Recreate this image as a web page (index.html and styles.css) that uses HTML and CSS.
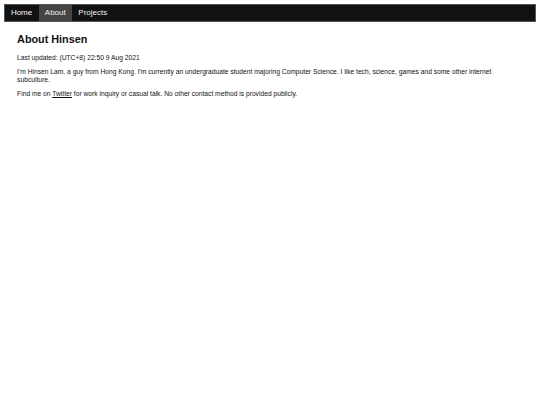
FILE: index.html
```html
<!DOCTYPE html>
<html lang="en">
<head>
<meta charset="utf-8">
<title>About Hinsen</title>
<link rel="stylesheet" href="styles.css">
</head>
<body>
<nav class="topnav">
  <a class="nav-link" href="#">Home</a>
  <a class="nav-link active" href="#">About</a>
  <a class="nav-link" href="#">Projects</a>
</nav>
<main class="content">
  <h1 class="title">About Hinsen</h1>
  <p class="text">Last updated: (UTC+8) 22:50 9 Aug 2021</p>
  <p class="text">I'm Hinsen Lam, a guy from Hong Kong. I'm currently an undergraduate student majoring Computer Science. I like tech, science, games and some other internet subculture.</p>
  <p class="text">Find me on <a class="link" href="#">Twitter</a> for work inquiry or casual talk. No other contact method is provided publicly.</p>
</main>
</body>
</html>
```

FILE: styles.css
```css
html, body {
  margin: 0;
  padding: 0;
  background: #fff;
}
body {
  padding: 3.6px;
  font-family: "Liberation Sans", Arial, sans-serif;
  color: #111;
}
.topnav {
  display: flex;
  background: #111;
  border: 0.5px solid #555;
  height: 16.5px;
  align-items: stretch;
}
.nav-link {
  display: flex;
  align-items: center;
  padding: 0 6.3px;
  color: #f2f2f2;
  text-decoration: none;
  font-size: 8px;
}
.nav-link.active {
  background: #444;
}
.content {
  padding: 0 13.5px;
}
.title {
  font-size: 10.8px;
  font-weight: bold;
  margin: 10px 0 0;
  line-height: 14px;
}
.text {
  font-size: 6.7px;
  line-height: 7.9px;
  margin: 6.2px 0 0;
}
.text:first-of-type {
  margin-top: 7.5px;
}
.link {
  color: #111;
  text-decoration: underline;
}
```
